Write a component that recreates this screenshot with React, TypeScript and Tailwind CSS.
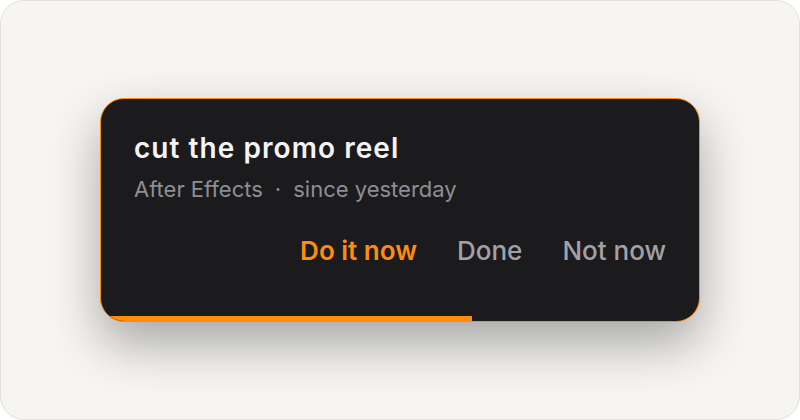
export default function App() {
  return (
    <div
      className="w-[800px] h-[420px] bg-[#f6f5f2] border border-[#e2e0dc] rounded-[24px] flex items-center justify-center"
      style={{ fontFamily: "Inter, 'Noto Sans', sans-serif" }}
    >
      <div className="w-[600px] h-[224px] bg-[#1b1b1d] border-[1.5px] border-[#ff8c0a] rounded-[24px] overflow-hidden flex flex-col shadow-[0_22px_50px_rgba(0,0,0,0.32)]">
        <div className="flex-1 flex flex-col pl-[33px] pr-[33px] pt-[31px]">
          <h1 className="text-[28px] leading-[36px] font-semibold text-[#f4f4f5] tracking-[1.05px]">
            cut the promo reel
          </h1>
          <div className="mt-[9px] text-[22px] leading-[28px] text-[#8e8e93] flex items-center">
            <span>After Effects</span>
            <span className="mx-[12px]">·</span>
            <span>since yesterday</span>
          </div>
          <div className="mt-[32px] flex justify-end items-center gap-[40px] text-[26px] leading-[32px]">
            <button className="font-semibold text-[#ff8c0a]">Do it now</button>
            <button className="font-medium text-[#a1a1a6]">Done</button>
            <button className="font-medium text-[#a1a1a6]">Not now</button>
          </div>
        </div>
        <div className="h-[5px] w-full">
          <div className="h-full bg-[#ff8c0a] w-[62%]" />
        </div>
      </div>
    </div>
  )
}
